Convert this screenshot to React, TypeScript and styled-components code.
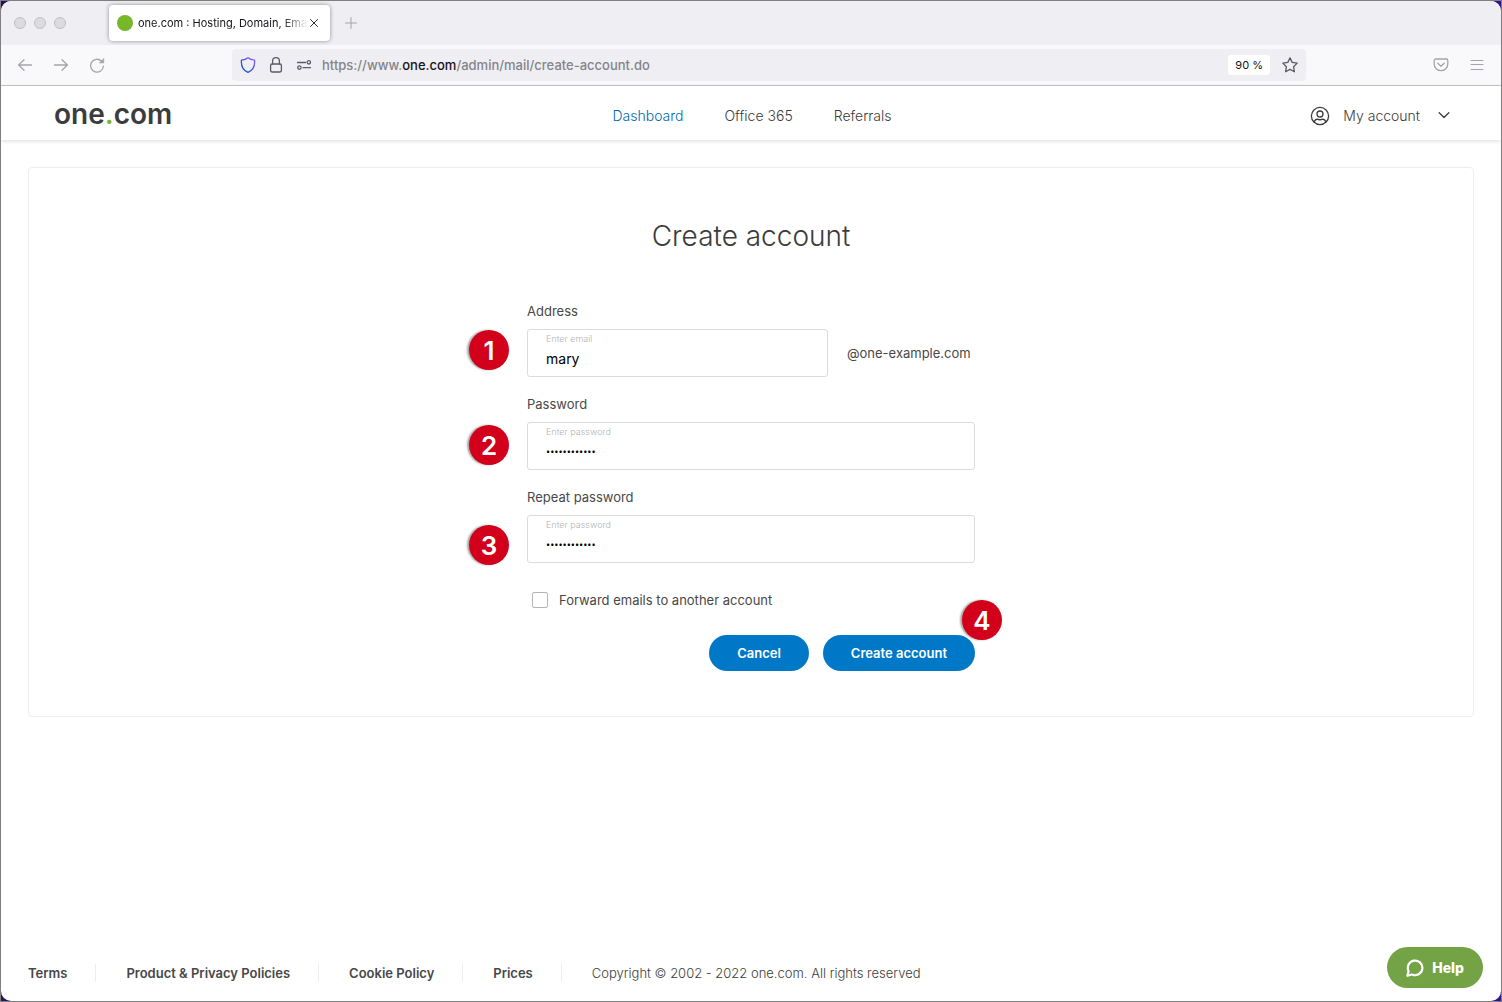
import React from "react";
import styled, { createGlobalStyle } from "styled-components";

const GlobalStyle = createGlobalStyle`
  *, *::before, *::after { box-sizing: border-box; }
  body { margin: 0; background: linear-gradient(90deg, #2a1160, #35128c); }
  body, button, input { font-family: Inter, "Noto Sans", sans-serif; }
  a { color: inherit; text-decoration: none; }
  button { padding: 0; border: 0; background: none; color: inherit; cursor: pointer; }
`;

const BrowserWindow = styled.div`
  display: flex;
  flex-direction: column;
  min-height: 100vh;
  border: 1px solid #7f7f7f;
`;

const WindowBody = styled.div`
  display: flex;
  flex: 1;
  flex-direction: column;
  overflow: hidden;
  border-radius: 10px;
  background: #fff;
`;

const TabStrip = styled.div`
  display: flex;
  align-items: center;
  height: 44px;
  padding-left: 12px;
  background: #efeef3;
`;

const WindowControls = styled.div`
  display: flex;
  gap: 8px;
  width: 96px;
  padding-left: 1px;
`;

const WindowControl = styled.button`
  width: 12px;
  height: 12px;
  border: 1px solid #c1c0c4;
  border-radius: 50%;
  background: #dcdbdf;
`;

const Tab = styled.div`
  display: flex;
  align-items: center;
  width: 221px;
  height: 36px;
  padding: 0 10px 0 8px;
  border-radius: 4px;
  background: #fff;
  box-shadow: 0 0 4px rgba(0, 0, 0, 0.4);
`;

const Favicon = styled.span`
  flex: none;
  width: 16px;
  height: 16px;
  margin-right: 5px;
  border-radius: 50%;
  background: #76b82a;
`;

const TabTitle = styled.span`
  flex: 1;
  color: #15141a;
  font-size: 11px;
  line-height: 16px;
  white-space: nowrap;
  mask-image: linear-gradient(90deg, #000 85%, transparent);
`;

const IconButton = styled.button<{ $color?: string }>`
  display: flex;
  flex: none;
  color: ${({ $color }) => $color ?? "#a5a4aa"};
`;

const NewTab = styled(IconButton)`
  margin-left: 13px;
`;

const Toolbar = styled.div`
  display: flex;
  align-items: center;
  justify-content: space-between;
  height: 41px;
  padding: 0 16px;
  border-bottom: 1px solid #c6c6ca;
  background: #f9f9fb;
`;

const ToolGroup = styled.div`
  display: flex;
  gap: 20px;
  width: 215px;
`;

const MenuGroup = styled(ToolGroup)`
  justify-content: flex-end;
  width: 179px;
`;

const AddressBar = styled.div`
  display: flex;
  flex: 1;
  align-items: center;
  gap: 10px;
  height: 32px;
  padding: 0 8px;
  border-radius: 4px;
  background: #efeef3;
`;

const AddressTools = styled.div`
  display: flex;
  align-items: center;
  gap: 12px;
`;

const Url = styled.div`
  flex: 1;
  color: #85848a;
  font-size: 13px;
  font-weight: 500;
  line-height: 20px;
  white-space: nowrap;
`;

const UrlHost = styled.span`
  color: #15141a;
`;

const ZoomLevel = styled.button`
  height: 20px;
  padding: 0 7px;
  border-radius: 3px;
  background: #fff;
  color: #15141a;
  font-size: 11px;
`;

const SiteHeader = styled.header`
  display: grid;
  grid-template-columns: 1fr auto 1fr;
  align-items: center;
  height: 54px;
  padding: 6px 51px 0 53px;
  box-shadow: 0 1px 4px rgba(0, 0, 0, 0.15);
`;

const Logo = styled.a`
  padding-bottom: 4px;
  color: #3c3c3c;
  font-size: 28px;
  font-weight: 600;
  line-height: 32px;
`;

const LogoDot = styled.span`
  color: #76b82a;
`;

const Nav = styled.nav`
  display: flex;
  gap: 41px;
  color: #3c3c3c;
  font-size: 14px;
  font-weight: 300;
  line-height: 20px;
`;

const NavLink = styled.a<{ $active?: boolean }>`
  color: ${({ $active }) => ($active ? "#0069ae" : "inherit")};
`;

const AccountMenu = styled.button`
  display: flex;
  align-items: center;
  justify-self: end;
  color: #3c3c3c;
  font-size: 14px;
  font-weight: 300;
  line-height: 20px;
`;

const AccountName = styled.span`
  margin: 0 18px 0 13px;
`;

const Main = styled.main`
  flex: 1;
  padding: 27px 27px 40px;
`;

const Card = styled.section`
  padding: 50px 24px 45px;
  border: 1px solid #ededed;
  border-radius: 4px;
`;

const Title = styled.h1`
  margin: 0 0 47px;
  color: #3c3c3c;
  font-size: 28px;
  font-weight: 300;
  line-height: 36px;
  text-align: center;
`;

const Form = styled.form`
  max-width: 448px;
  margin: 0 auto;
  color: #484848;
  font-size: 13px;
  font-weight: 400;
  line-height: 20px;
`;

const Field = styled.div`
  margin-bottom: 17px;
`;

const FieldLabel = styled.label`
  display: block;
  margin-bottom: 8px;
`;

const FieldRow = styled.div`
  position: relative;
  display: flex;
  align-items: center;
  gap: 19px;
`;

const InputBox = styled.div<{ $width?: number }>`
  flex: ${({ $width }) => ($width ? `0 1 ${$width}px` : "1")};
  height: 48px;
  padding: 3px 18px;
  border: 1px solid #dcdcdc;
  border-radius: 3px;
`;

const Hint = styled.label`
  display: block;
  color: #b4b4b4;
  font-size: 9px;
  font-weight: 300;
  line-height: 12px;
`;

const TextInput = styled.input`
  display: block;
  width: 100%;
  height: 26px;
  padding: 0;
  border: 0;
  outline: 0;
  background: none;
  color: #000;
  font-size: 14px;

  &[type="password"] {
    font-family: "Open Sans", sans-serif;
    font-size: 11px;
  }
`;

const Step = styled.span<{ $top: number; $left: number }>`
  position: absolute;
  top: ${({ $top }) => $top}px;
  left: ${({ $left }) => $left}px;
  width: 40px;
  height: 40px;
  border-radius: 50%;
  background: #d2001a;
  box-shadow: -2px 0 2px rgba(0, 0, 0, 0.35);
  color: #fff;
  font-size: 26px;
  font-weight: 600;
  line-height: 42px;
  text-align: center;
`;

const CheckRow = styled.label`
  display: flex;
  align-items: center;
  gap: 11px;
  margin: 27px 0 25px;
  padding-left: 5px;
`;

const Checkbox = styled.input`
  width: 16px;
  height: 16px;
  margin: 0;
  border: 1px solid #b4b4b4;
  border-radius: 2px;
  background: #fff;
  appearance: none;

  &:checked {
    background: #0078c8;
  }
`;

const Actions = styled.div`
  position: relative;
  display: flex;
  justify-content: flex-end;
  gap: 14px;
`;

const PillButton = styled.button`
  height: 36px;
  padding: 0 28px;
  border-radius: 18px;
  background: #0078c8;
  color: #fff;
  font-size: 13px;
  font-weight: 600;
`;

const Footer = styled.footer`
  display: flex;
  align-items: center;
  padding: 0 27px 19px;
  color: #484848;
  font-size: 13px;
  line-height: 18px;
`;

const FooterLink = styled.a`
  margin-right: 30px;
  padding-right: 28px;
  border-right: 1px solid #ededed;
  font-weight: 600;
`;

const Copyright = styled.span`
  color: #3c3c3c;
  font-weight: 300;
`;

const HelpButton = styled.button`
  position: fixed;
  right: 19px;
  bottom: 14px;
  display: flex;
  align-items: center;
  gap: 8px;
  height: 41px;
  padding: 0 19px;
  border-radius: 21px;
  background: #73a345;
  color: #fff;
  font-size: 14px;
  font-weight: 800;
`;

const Icon = ({ size = 16, width = 1, children }: { size?: number; width?: number; children: React.ReactNode }) => (
  <svg width={size} height={size} viewBox={`0 0 ${size} ${size}`} fill="none" stroke="currentColor" strokeWidth={width} strokeLinecap="round" strokeLinejoin="round" aria-hidden="true">
    {children}
  </svg>
);

const footerLinks = ["Terms", "Product & Privacy Policies", "Cookie Policy", "Prices"];

const PasswordField = ({ id, label, step, top }: { id: string; label: string; step: number; top: number }) => (
  <Field>
    <FieldLabel htmlFor={id}>{label}</FieldLabel>
    <FieldRow>
      <Step $top={top} $left={-58}>{step}</Step>
      <InputBox>
        <Hint htmlFor={id}>Enter password</Hint>
        <TextInput id={id} type="password" defaultValue="abcdefghijkl" />
      </InputBox>
    </FieldRow>
  </Field>
);

export default function App() {
  return (
    <>
      <GlobalStyle />
      <BrowserWindow>
        <WindowBody>
          <TabStrip>
            <WindowControls>
              <WindowControl aria-label="Close window" />
              <WindowControl aria-label="Minimize window" />
              <WindowControl aria-label="Zoom window" />
            </WindowControls>
            <Tab>
              <Favicon />
              <TabTitle>one.com : Hosting, Domain, Ema</TabTitle>
              <IconButton $color="#2b2a33" aria-label="Close tab">
                <Icon size={12}><path d="M2.5 2.5l7 7m0-7l-7 7" /></Icon>
              </IconButton>
            </Tab>
            <NewTab aria-label="New tab">
              <Icon><path d="M8 2.5v11M2.5 8h11" /></Icon>
            </NewTab>
          </TabStrip>
          <Toolbar>
            <ToolGroup>
              <IconButton aria-label="Back">
                <Icon width={1.3}><path d="M14.5 8H1.8M7 2.7L1.6 8L7 13.3" /></Icon>
              </IconButton>
              <IconButton aria-label="Forward">
                <Icon width={1.3}><path d="M1.5 8h12.7M9 2.7L14.4 8L9 13.3" /></Icon>
              </IconButton>
              <IconButton aria-label="Reload">
                <Icon width={1.3}>
                  <path d="M12.4 4A6.4 6.4 0 1 0 14.4 9.2" />
                  <path d="M14.8 1.6V6H10.4Z" fill="currentColor" strokeWidth="0.5" />
                </Icon>
              </IconButton>
            </ToolGroup>
            <AddressBar>
              <AddressTools>
                <IconButton aria-label="Tracking protection">
                  <Icon width={1.3}>
                    <defs>
                      <linearGradient id="shield" x1="1" y1="0" x2="0" y2="1">
                        <stop offset="0" stopColor="#9059ff" />
                        <stop offset="1" stopColor="#0250bb" />
                      </linearGradient>
                    </defs>
                    <path stroke="url(#shield)" d="M8 .8C6.2 2.3 4 3 1.4 3.2C1 8.8 3 13.2 8 15.3C13 13.2 15 8.8 14.6 3.2C12 3 9.8 2.3 8 .8Z" />
                  </Icon>
                </IconButton>
                <IconButton $color="#5b5b66" aria-label="Site security">
                  <Icon width={1.3}>
                    <rect x="2.6" y="7" width="10.8" height="8" rx="1.4" />
                    <path d="M4.6 7V4.1a3.4 3.4 0 0 1 6.8 0V7" />
                  </Icon>
                </IconButton>
                <IconButton $color="#5b5b66" aria-label="Site permissions">
                  <Icon width={1.3}>
                    <path d="M1.5 5.5h8M7 10.7h7.5" />
                    <circle cx="12.8" cy="5.3" r="1.7" />
                    <circle cx="3.4" cy="10.6" r="1.7" />
                  </Icon>
                </IconButton>
              </AddressTools>
              <Url>https://www.<UrlHost>one.com</UrlHost>/admin/mail/create-account.do</Url>
              <AddressTools>
                <ZoomLevel>90 %</ZoomLevel>
                <IconButton $color="#5b5b66" aria-label="Bookmark page">
                  <Icon width={1.3}>
                    <path d="M8 .9L10.2 5.4L15.2 6.1L11.6 9.7L12.4 14.8L8 12.4L3.6 14.8L4.4 9.7L.8 6.1L5.8 5.4Z" />
                  </Icon>
                </IconButton>
              </AddressTools>
            </AddressBar>
            <MenuGroup>
              <IconButton aria-label="Save to Pocket">
                <Icon width={1.3}>
                  <path d="M2.6 2h10.8a1.4 1.4 0 0 1 1.4 1.4v3.5a6.8 6.8 0 0 1-13.6 0V3.4A1.4 1.4 0 0 1 2.6 2Z" />
                  <path d="M4.8 6.2L8 9.3l3.2-3.1" />
                </Icon>
              </IconButton>
              <IconButton aria-label="Open menu">
                <Icon><path d="M2 3.5h12M2 7.5h12M2 12.5h12" /></Icon>
              </IconButton>
            </MenuGroup>
          </Toolbar>
          <SiteHeader>
            <Logo href="#">one<LogoDot>.</LogoDot>com</Logo>
            <Nav>
              <NavLink href="#" $active>Dashboard</NavLink>
              <NavLink href="#">Office 365</NavLink>
              <NavLink href="#">Referrals</NavLink>
            </Nav>
            <AccountMenu>
              <Icon size={20} width={1.3}>
                <circle cx="10" cy="10" r="8.6" />
                <circle cx="10" cy="8" r="3" />
                <path d="M4.3 16c.3-2 1.6-2.7 3.2-2.9c1.6.8 3.4.8 5 0c1.6.2 2.9.9 3.2 2.9" />
              </Icon>
              <AccountName>My account</AccountName>
              <Icon size={12} width={1.3}><path d="M1.2 2.7L6 7.5l4.8-4.8" /></Icon>
            </AccountMenu>
          </SiteHeader>
          <Main>
            <Card>
              <Title>Create account</Title>
              <Form onSubmit={(event) => event.preventDefault()}>
                <Field>
                  <FieldLabel htmlFor="address">Address</FieldLabel>
                  <FieldRow>
                    <Step $top={1} $left={-58}>1</Step>
                    <InputBox $width={301}>
                      <Hint htmlFor="address">Enter email</Hint>
                      <TextInput id="address" type="text" defaultValue="mary" />
                    </InputBox>
                    <span>@one-example.com</span>
                  </FieldRow>
                </Field>
                <PasswordField id="password" label="Password" step={2} top={3} />
                <PasswordField id="repeat" label="Repeat password" step={3} top={10} />
                <CheckRow>
                  <Checkbox type="checkbox" />
                  Forward emails to another account
                </CheckRow>
                <Actions>
                  <PillButton type="button">Cancel</PillButton>
                  <PillButton type="submit">Create account</PillButton>
                  <Step $top={-35} $left={435}>4</Step>
                </Actions>
              </Form>
            </Card>
          </Main>
          <Footer>
            {footerLinks.map((text) => (
              <FooterLink key={text} href="#">{text}</FooterLink>
            ))}
            <Copyright>Copyright © 2002 - 2022 one.com. All rights reserved</Copyright>
          </Footer>
        </WindowBody>
        <HelpButton>
          <Icon size={18} width={2.2}>
            <path d="M2.6 12.2A7.3 7.3 0 1 1 6 15.5L1.4 16.8Z" />
          </Icon>
          Help
        </HelpButton>
      </BrowserWindow>
    </>
  );
}
